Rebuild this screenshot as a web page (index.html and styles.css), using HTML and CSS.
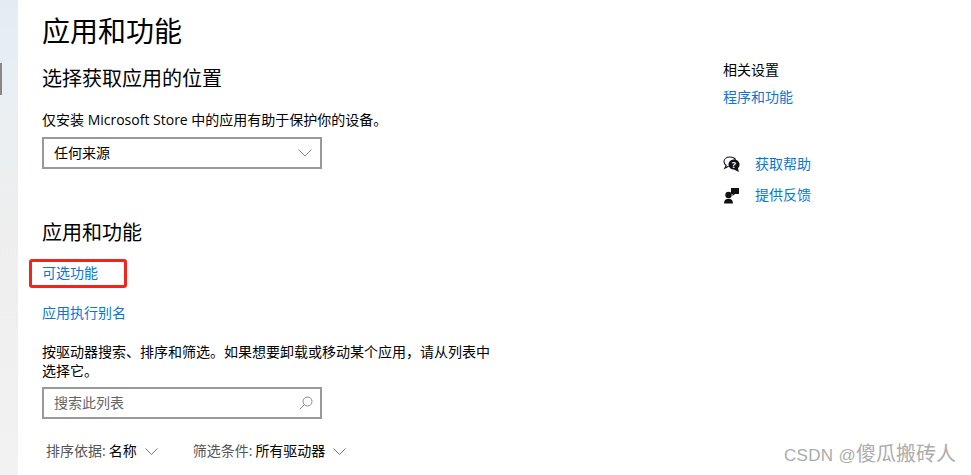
FILE: index.html
```html
<!DOCTYPE html>
<html lang="zh-CN">
	<head>
		<meta charset="utf-8">
		<title>应用和功能</title>
		<link rel="stylesheet" href="styles.css">
	</head>
	<body>
		<div class="sidebar">
			<div class="indicator"></div>
		</div>
		<div class="content">
			<h1>应用和功能</h1>
			<h2 class="sub-first">选择获取应用的位置</h2>
			<p class="store-text">仅安装 Microsoft Store 中的应用有助于保护你的设备。</p>
			<div class="field">
				<span class="field-text">任何来源</span>
				<svg class="chevron-big" width="14" height="8" viewBox="0 0 14 8"><path d="M0.5 0.5 L7 7 L13.5 0.5" fill="none" stroke="#888" stroke-width="1"/></svg>
			</div>
			<h2 class="sub-second">应用和功能</h2>
			<a class="link link-marked">可选功能</a>
			<a class="link link-alias">应用执行别名</a>
			<p class="search-text">按驱动器搜索、排序和筛选。如果想要卸载或移动某个应用，请从列表中选择它。</p>
			<div class="field">
				<span class="field-text muted">搜索此列表</span>
				<svg class="search-icon" width="14" height="14" viewBox="0 0 14 14"><circle cx="8.5" cy="5.5" r="4.5" fill="none" stroke="#888" stroke-width="1"/><path d="M5.2 8.8 L0.8 13.2" fill="none" stroke="#888" stroke-width="1"/></svg>
			</div>
			<div class="filters">
				<div class="filter">
					<span class="filter-label">排序依据:</span> <span>名称</span>
					<svg class="chevron-small" width="13" height="7" viewBox="0 0 13 7"><path d="M0.5 0.5 L6.5 6.5 L12.5 0.5" fill="none" stroke="#777" stroke-width="1"/></svg>
				</div>
				<div class="filter">
					<span class="filter-label">筛选条件:</span> <span>所有驱动器</span>
					<svg class="chevron-small" width="13" height="7" viewBox="0 0 13 7"><path d="M0.5 0.5 L6.5 6.5 L12.5 0.5" fill="none" stroke="#777" stroke-width="1"/></svg>
				</div>
			</div>
		</div>
		<div class="related">
			<p class="related-title">相关设置</p>
			<a class="link">程序和功能</a>
			<div class="help-list">
				<div class="help-row">
					<svg width="18" height="17" viewBox="0 0 18 17">
						<path d="M7 1 C3.5 1 1 3 1 5.7 C1 7.3 1.9 8.6 3.2 9.5 L1.8 12.2 L5.6 10.3" fill="none" stroke="#111" stroke-width="1.1"/>
						<path d="M7 1 C9.5 1 11.6 2 12.6 3.6" fill="none" stroke="#111" stroke-width="1.1"/>
						<path d="M11 3.6 C7.9 3.6 5.5 5.8 5.5 8.6 C5.5 11.4 7.9 13.6 11 13.6 L15.8 16 L15 12.2 C16 11.3 16.6 10 16.6 8.6 C16.6 5.8 14.1 3.6 11 3.6 Z" fill="#111"/>
						<text class="help-mark" x="11" y="12" text-anchor="middle">?</text>
					</svg>
					<a class="link">获取帮助</a>
				</div>
				<div class="help-row">
					<svg width="18" height="17" viewBox="0 0 18 17">
						<path d="M8 1 H16 V7 H12 L9.5 9 V7 H8 Z" fill="#111"/>
						<circle cx="5.5" cy="8" r="3.2" fill="#111"/>
						<path d="M1 16.5 C1 13.2 3 11.8 5.5 11.8 C8 11.8 10 13.2 10 16.5 Z" fill="#111"/>
					</svg>
					<a class="link">提供反馈</a>
				</div>
			</div>
		</div>
		<div class="watermark">CSDN @<span class="watermark-name">傻瓜搬砖人</span></div>
	</body>
</html>
```

FILE: styles.css
```css
* {
	box-sizing: border-box;
}
html, body {
	height: 100%;
}
body {
	margin: 0;
	display: flex;
	position: relative;
	overflow: hidden;
	background-color: #fff;
	color: #000;
	font-family: "Open Sans", "Noto Sans CJK SC", sans-serif;
	font-size: 14px;
}
h1, h2, p {
	margin: 0;
	font-weight: normal;
}
.sidebar {
	width: 18px;
	flex-shrink: 0;
	padding-top: 63px;
	background: linear-gradient(#e4ecf3, #e9eff3 90px, #eeeeee 230px, #f2f2f2);
}
.indicator {
	width: 2px;
	height: 32px;
	background-color: #888;
}
.content {
	width: 480px;
	margin-left: 24px;
	flex-shrink: 0;
}
h1 {
	margin-top: 13px;
	font-size: 28px;
	line-height: 36px;
}
h2 {
	font-size: 20px;
	line-height: 28px;
}
.sub-first {
	margin-top: 16px;
}
.store-text {
	margin-top: 17px;
	line-height: 20px;
}
.field {
	width: 280px;
	height: 32px;
	margin-top: 7px;
	padding: 0 7px 0 10px;
	display: flex;
	align-items: center;
	justify-content: space-between;
	border: 2px solid #999;
}
.field-text {
	margin-bottom: 2px;
}
.muted {
	color: #666;
}
.chevron-big {
	margin-right: 1px;
}
.sub-second {
	margin-top: 50px;
}
.link {
	display: block;
	color: #0a78d0;
	line-height: 20px;
}
.link-marked {
	width: 98px;
	height: 29px;
	margin: 12px 0 0 -13px;
	padding: 1px 0 0 10px;
	border: 3px solid #f0261c;
	border-radius: 3px;
}
.link-alias {
	margin-top: 15px;
}
.search-text {
	width: 456px;
	margin-top: 19px;
	line-height: 19px;
}
.search-text + .field {
	margin-top: 7px;
}
.filters {
	margin: 22px 0 0 4px;
	display: flex;
	gap: 35px;
}
.filter {
	display: flex;
	align-items: center;
	gap: 3px;
	line-height: 20px;
}
.filter-label {
	color: #555;
}
.chevron-small {
	margin-left: 5px;
}
.related {
	margin-left: 201px;
	padding-top: 60px;
}
.related-title {
	line-height: 20px;
}
.related .link {
	margin-top: 7px;
}
.help-list {
	margin-top: 47px;
	display: flex;
	flex-direction: column;
	gap: 11px;
}
.help-row {
	display: flex;
	align-items: center;
	gap: 14px;
}
.help-row .link {
	margin-top: 0;
}
.help-mark {
	fill: #fff;
	font-size: 9px;
	font-weight: bold;
}
.watermark {
	position: absolute;
	right: 15px;
	bottom: 8px;
	font-family: "Liberation Sans", "Noto Sans CJK SC", sans-serif;
	font-size: 17px;
	letter-spacing: 0.3px;
	color: #acacac;
}
.watermark-name {
	font-size: 20px;
	letter-spacing: 0;
}
```
